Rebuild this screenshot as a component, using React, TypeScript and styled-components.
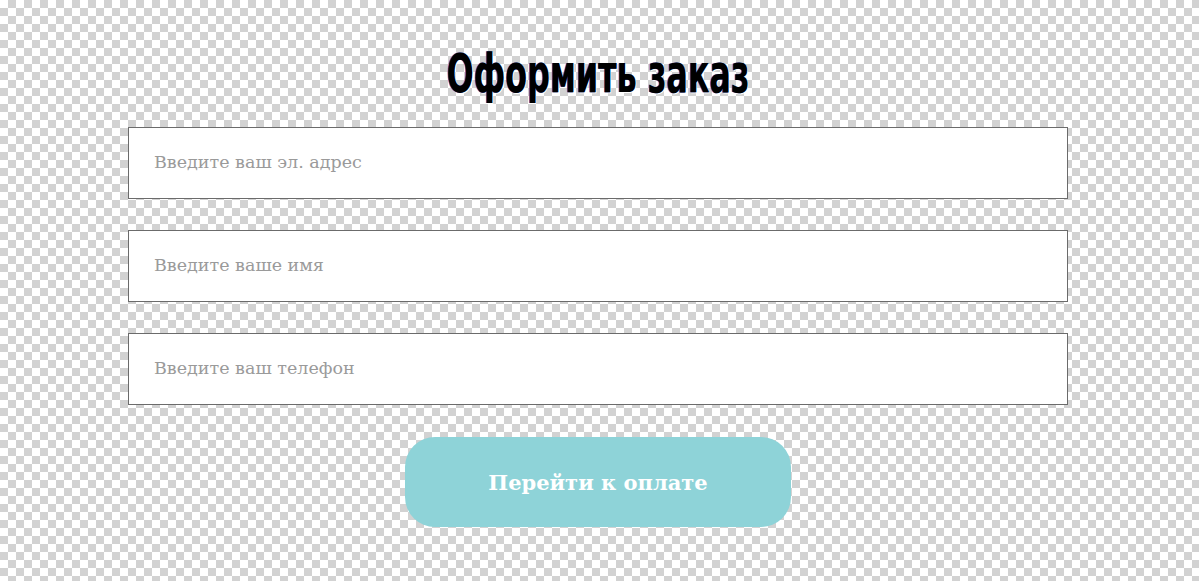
import React from "react";
import styled, { createGlobalStyle } from "styled-components";

const Global = createGlobalStyle`
  html, body { margin: 0; padding: 0; }
  body {
    width: 1199px;
    height: 581px;
    overflow: hidden;
    background-color: #ffffff;
    background-image:
      linear-gradient(45deg, #d2d2d2 25%, transparent 25%, transparent 75%, #d2d2d2 75%),
      linear-gradient(45deg, #d2d2d2 25%, transparent 25%, transparent 75%, #d2d2d2 75%);
    background-size: 16px 16px;
    background-position: 0 0, 8px 8px;
  }
`;

const Page = styled.div`
  display: flex;
  flex-direction: column;
  align-items: center;
  padding-top: 41px;
  padding-right: 3px;
`;

const Title = styled.h1`
  margin: 0 0 20px 0;
  display: inline-block;
  transform: scaleX(0.655);
  font-family: "DejaVu Sans Condensed", "DejaVu Sans", sans-serif;
  font-weight: 700;
  font-size: 54px;
  line-height: 66px;
  white-space: nowrap;
  color: #000;
  text-shadow: -1px 0 0 #2a46c8, 1px 1px 0 #ffffff;
`;

const Form = styled.form`
  width: 940px;
  display: flex;
  flex-direction: column;
  align-items: center;
  gap: 31px;
`;

const Field = styled.input`
  box-sizing: border-box;
  width: 100%;
  height: 72px;
  border: 1px solid #6b6b6b;
  background: #fff;
  padding: 0 25px 2px;
  font-family: "DejaVu Serif", serif;
  font-size: 17.5px;
  color: #333;
  outline: none;
  &::placeholder {
    color: #9a9a9a;
  }
`;

const Submit = styled.button`
  margin-top: 1px;
  width: 386px;
  height: 90px;
  border: none;
  border-radius: 30px;
  background: #8ed3d8;
  color: #fff;
  font-family: "DejaVu Serif", serif;
  font-weight: 700;
  font-size: 21px;
  cursor: pointer;
`;

export default function App() {
  return (
    <>
      <Global />
      <Page>
        <Title>Оформить заказ</Title>
        <Form onSubmit={(e) => e.preventDefault()}>
          <Field type="email" placeholder="Введите ваш эл. адрес" />
          <Field type="text" placeholder="Введите ваше имя" />
          <Field type="tel" placeholder="Введите ваш телефон" />
          <Submit type="submit">Перейти к оплате</Submit>
        </Form>
      </Page>
    </>
  );
}
